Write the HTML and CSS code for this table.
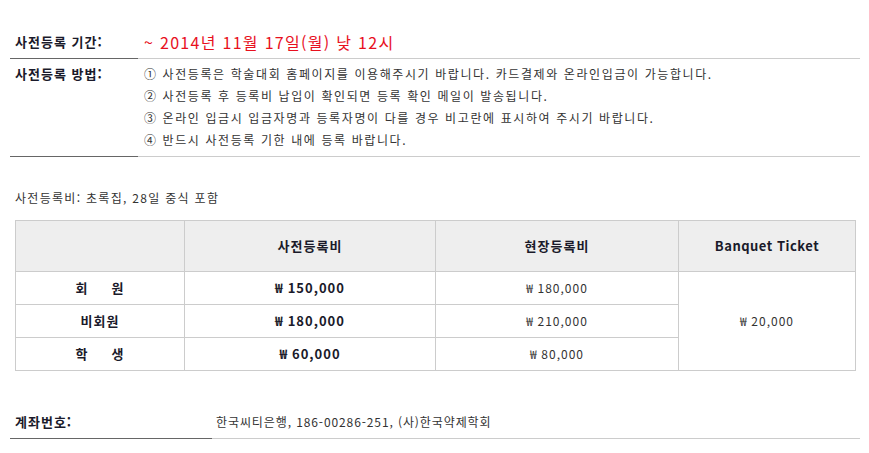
FILE: index.html
```html
<!DOCTYPE html>
<html lang="ko">
<head>
<meta charset="utf-8">
<title>사전등록</title>
<link rel="stylesheet" href="styles.css">
</head>
<body>
<div class="page">
  <div class="info-row">
    <div class="info-label">사전등록 기간:</div>
    <div class="info-value deadline">~ 2014년 11월 17일(월) 낮 12시</div>
  </div>
  <div class="info-row">
    <div class="info-label">사전등록 방법:</div>
    <div class="info-value steps">
      <p class="step">① 사전등록은 학술대회 홈페이지를 이용해주시기 바랍니다. 카드결제와 온라인입금이 가능합니다.</p>
      <p class="step">② 사전등록 후 등록비 납입이 확인되면 등록 확인 메일이 발송됩니다.</p>
      <p class="step">③ 온라인 입금시 입금자명과 등록자명이 다를 경우 비고란에 표시하여 주시기 바랍니다.</p>
      <p class="step">④ 반드시 사전등록 기한 내에 등록 바랍니다.</p>
    </div>
  </div>

  <p class="fee-note">사전등록비: 초록집, 28일 중식 포함</p>

  <table class="fee-table">
    <colgroup>
      <col class="c1"><col class="c2"><col class="c3"><col class="c4">
    </colgroup>
    <thead>
      <tr><th></th><th>사전등록비</th><th>현장등록비</th><th class="latin">Banquet Ticket</th></tr>
    </thead>
    <tbody>
      <tr><td class="strong">회&nbsp;&nbsp;&nbsp;&nbsp;&nbsp;원</td><td class="strong">₩ 150,000</td><td>₩ 180,000</td><td rowspan="3">₩ 20,000</td></tr>
      <tr><td class="strong">비회원</td><td class="strong">₩ 180,000</td><td>₩ 210,000</td></tr>
      <tr><td class="strong">학&nbsp;&nbsp;&nbsp;&nbsp;&nbsp;생</td><td class="strong">₩ 60,000</td><td>₩ 80,000</td></tr>
    </tbody>
  </table>

  <div class="info-row account">
    <div class="info-label">계좌번호:</div>
    <div class="info-value">한국씨티은행, 186-00286-251, (사)한국약제학회</div>
  </div>
</div>
</body>
</html>
```
FILE: styles.css
```css
html, body {
  margin: 0;
  padding: 0;
  background: #fff;
}
body {
  font-family: "Noto Sans CJK KR", "Noto Sans", sans-serif;
  font-size: 12px;
  color: #333;
  letter-spacing: 1px;
}
.page {
  padding: 27px 9px 0 10px;
  width: 850px;
}
.info-row {
  display: flex;
  line-height: 22px;
}
.info-label {
  width: 123px;
  padding: 4px 0 5px 5px;
  border-bottom: 1px solid #666;
  font-weight: bold;
  font-size: 13px;
  color: #1a1a2a;
}
.info-value {
  flex: 1;
  padding: 4px 0 5px 6px;
  border-bottom: 1px solid #ccc;
}
.deadline {
  color: #e8101e;
  font-size: 16px;
  letter-spacing: 1.3px;
}
.steps {
  letter-spacing: 1.6px;
}
.step {
  margin: 0;
}
.fee-note {
  margin: 30px 0 0 5px;
  line-height: 22px;
  letter-spacing: 1.3px;
}
.fee-table {
  margin: 11px 0 0 5px;
  width: 840px;
  table-layout: fixed;
  border-collapse: collapse;
  border: 1px solid #ccc;
}
.c1 { width: 169px; }
.c2 { width: 251px; }
.c3 { width: 243px; }
.c4 { width: 177px; }
.fee-table th,
.fee-table td {
  border: 1px solid #ccc;
  text-align: center;
  line-height: 22px;
  padding: 5px 0;
}
.fee-table th {
  background: #eee;
  padding: 14px 0;
  font-weight: bold;
  font-size: 13px;
  color: #1a1a2a;
}
.fee-table th.latin {
  letter-spacing: 0.5px;
}
.fee-table td.strong {
  font-weight: bold;
  font-size: 13px;
  color: #1a1a2a;
}
.account {
  margin-top: 36px;
}
.account .info-label {
  width: 197px;
}
.account .info-value {
  padding-left: 4px;
  letter-spacing: 0.9px;
}
```
